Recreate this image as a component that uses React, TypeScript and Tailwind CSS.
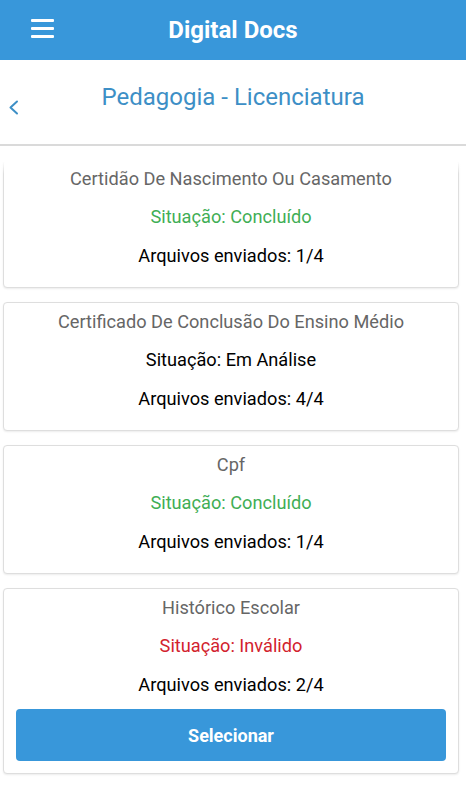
import React from "react";

type Doc = { title: string; status: string; color: string; sent: string; button?: boolean };

const docs: Doc[] = [
  { title: "Certidão De Nascimento Ou Casamento", status: "Situação: Concluído", color: "text-[#3fae55]", sent: "1/4" },
  { title: "Certificado De Conclusão Do Ensino Médio", status: "Situação: Em Análise", color: "text-black", sent: "4/4" },
  { title: "Cpf", status: "Situação: Concluído", color: "text-[#3fae55]", sent: "1/4" },
  { title: "Histórico Escolar", status: "Situação: Inválido", color: "text-[#d2222d]", sent: "2/4", button: true },
];

function Card({ d }: { d: Doc }) {
  return (
    <div className="ml-[3px] w-[456px] box-border rounded-[4px] border border-[#dedede] bg-white shadow-[0_1px_2px_rgba(0,0,0,0.08)] pt-[7px] pb-[11px] flex flex-col items-center">
      <div className="h-[24px] leading-[24px] text-[18.2px] text-[#666666]">{d.title}</div>
      <div className={`mt-[14px] h-[24px] leading-[24px] text-[18.2px] ${d.color}`}>{d.status}</div>
      <div className="mt-[15px] h-[24px] leading-[24px] text-[18.2px] text-black">Arquivos enviados: {d.sent}</div>
      {d.button ? (
        <button className="mt-[12px] mb-[1px] w-[430px] h-[52px] rounded-[4px] bg-[#3897da] text-white font-bold text-[18px]">
          Selecionar
        </button>
      ) : (
        <div className="h-[8px]" />
      )}
    </div>
  );
}

export default function App() {
  return (
    <div className="w-[466px] h-[800px] bg-white overflow-hidden flex flex-col" style={{ fontFamily: "Roboto, 'Noto Sans', sans-serif" }}>
      <div className="h-[60px] shrink-0 bg-[#3897da] relative flex items-center justify-center">
        <div className="absolute left-[31px] top-[19px] flex flex-col gap-[5px]">
          <div className="w-[23px] h-[3px] bg-white rounded-[1px]" />
          <div className="w-[23px] h-[3px] bg-white rounded-[1px]" />
          <div className="w-[23px] h-[3px] bg-white rounded-[1px]" />
        </div>
        <div className="text-white font-bold text-[24px] leading-none">Digital Docs</div>
      </div>
      <div className="h-[86px] shrink-0 border-b-2 border-[#dadada] relative flex justify-center">
        <div className="absolute left-[8px] top-[40px]">
          <svg width="12" height="16" viewBox="0 0 12 16" fill="none">
            <path d="M9 1.5 L2.5 7.5 L9 13.5" stroke="#3d8fc6" strokeWidth="2" strokeLinecap="round" strokeLinejoin="round" />
          </svg>
        </div>
        <div className="mt-[23px] h-[28px] leading-[28px] text-[24px] text-[#3d8fc6]">Pedagogia - Licenciatura</div>
      </div>
      <div className="relative flex-1 overflow-hidden">
        <div className="flex flex-col gap-[14px] mt-[13px]">
          {docs.map((d) => (
            <Card key={d.title} d={d} />
          ))}
        </div>
        <div className="absolute left-0 right-0 top-0 h-[28px] bg-gradient-to-b from-white from-55% to-transparent" />
      </div>
    </div>
  );
}
